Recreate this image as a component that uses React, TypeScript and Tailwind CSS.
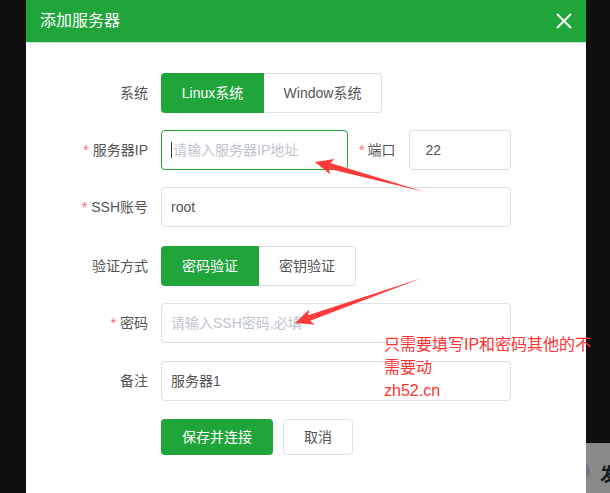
import React from "react";

const FONT = { fontFamily: '"Liberation Sans", "Noto Sans CJK SC", sans-serif' };

function Label({ text, req }: { text: string; req?: boolean }) {
  return (
    <div className="w-[122px] shrink-0 text-right text-[14px] text-[#555] mr-[13px]">
      {req && <span className="text-[#f56c6c] mr-[4px]">*</span>}
      {text}
    </div>
  );
}

export default function App() {
  return (
    <div className="relative w-[610px] h-[493px] overflow-hidden bg-[#0f0f0f] flex" style={FONT}>
      <div className="w-[26px] shrink-0" />
      <div className="w-[560px] shrink-0 h-full bg-white flex flex-col">
        <div className="h-[43px] bg-[#20a53a] border-b border-[#cbe9d2] flex items-center justify-between pl-[14px] pr-[14px]">
          <span className="text-white text-[16px]">添加服务器</span>
          <svg width="16" height="16" viewBox="0 0 16 16">
            <path d="M1 1 L15 15 M15 1 L1 15" stroke="#fff" strokeWidth="2" />
          </svg>
        </div>

        <div className="flex items-center mt-[30px]">
          <Label text="系统" />
          <div className="flex h-[40px]">
            <div className="w-[103px] rounded-l-[4px] bg-[#20a53a] text-white text-[14px] flex items-center justify-center">Linux系统</div>
            <div className="w-[118px] rounded-r-[4px] border border-l-0 border-[#dcdfe6] text-[#555] text-[14px] flex items-center justify-center">Window系统</div>
          </div>
        </div>

        <div className="flex items-center mt-[17px]">
          <Label text="服务器IP" req />
          <div className="w-[187px] h-[40px] rounded-[4px] border border-[#20a53a] flex items-center pl-[9px] text-[14px] text-[#c0c4cc]">
            <span className="w-[1px] h-[16px] bg-[#333] mr-[1px]" />
            请输入服务器IP地址
          </div>
          <div className="ml-[11px] text-[14px] text-[#555]">
            <span className="text-[#f56c6c] mr-[3px]">*</span>端口
          </div>
          <div className="ml-[14px] w-[102px] h-[40px] rounded-[4px] border border-[#dcdfe6] flex items-center pl-[15px] text-[14px] text-[#555]">22</div>
        </div>

        <div className="flex items-center mt-[17px]">
          <Label text="SSH账号" req />
          <div className="w-[350px] h-[40px] rounded-[4px] border border-[#dcdfe6] flex items-center pl-[9px] text-[14px] text-[#555]">root</div>
        </div>

        <div className="flex items-center mt-[19px]">
          <Label text="验证方式" />
          <div className="flex h-[40px]">
            <div className="w-[98px] rounded-l-[4px] bg-[#20a53a] text-white text-[14px] flex items-center justify-center">密码验证</div>
            <div className="w-[97px] rounded-r-[4px] border border-l-0 border-[#dcdfe6] text-[#555] text-[14px] flex items-center justify-center">密钥验证</div>
          </div>
        </div>

        <div className="flex items-center mt-[17px]">
          <Label text="密码" req />
          <div className="w-[350px] h-[40px] rounded-[4px] border border-[#dcdfe6] flex items-center pl-[9px] text-[14px] text-[#c0c4cc]">请输入SSH密码,必填</div>
        </div>

        <div className="flex items-center mt-[18px]">
          <Label text="备注" />
          <div className="w-[350px] h-[40px] rounded-[4px] border border-[#dcdfe6] flex items-center pl-[9px] text-[14px] text-[#555]">服务器1</div>
        </div>

        <div className="flex items-center mt-[18px] pl-[135px] gap-[10px]">
          <div className="w-[112px] h-[36px] rounded-[4px] bg-[#20a53a] text-white text-[14px] flex items-center justify-center">保存并连接</div>
          <div className="w-[70px] h-[36px] rounded-[4px] border border-[#dcdfe6] text-[#555] text-[14px] flex items-center justify-center">取消</div>
        </div>
      </div>
      <div className="flex-1 flex flex-col">
        <div className="h-[443px]" />
        <div className="relative flex-1 bg-[#8a8a8a] overflow-hidden">
          <div className="absolute left-[-10px] top-[20px] w-[14px] h-[16px] rounded-full bg-[#6f7a86]" />
          <span className="absolute left-[14px] top-[17px] text-[18px] font-bold text-[#1a1a1a]" style={{ fontFamily: '"Noto Sans CJK SC", sans-serif' }}>发</span>
        </div>
      </div>

      <svg className="absolute left-0 top-0 pointer-events-none" width="610" height="493">
        <polygon points="315,162 334.5,159 330.3,163 425,192 328.7,168.8 330.3,174.4" fill="#ff3b3b" />
        <polygon points="295,323 309.3,309.5 308.1,315.2 422,278 310.1,320.8 314.7,324.5" fill="#ff3b3b" />
      </svg>

      <div className="absolute left-[384px] top-[333px] text-[#ff3333] text-[16px] leading-[23px] whitespace-nowrap" style={{ fontFamily: '"Liberation Sans", "Noto Sans CJK SC", sans-serif' }}>
        只需要填写IP和密码其他的不<br />需要动<br />zh52.cn
      </div>
    </div>
  );
}
